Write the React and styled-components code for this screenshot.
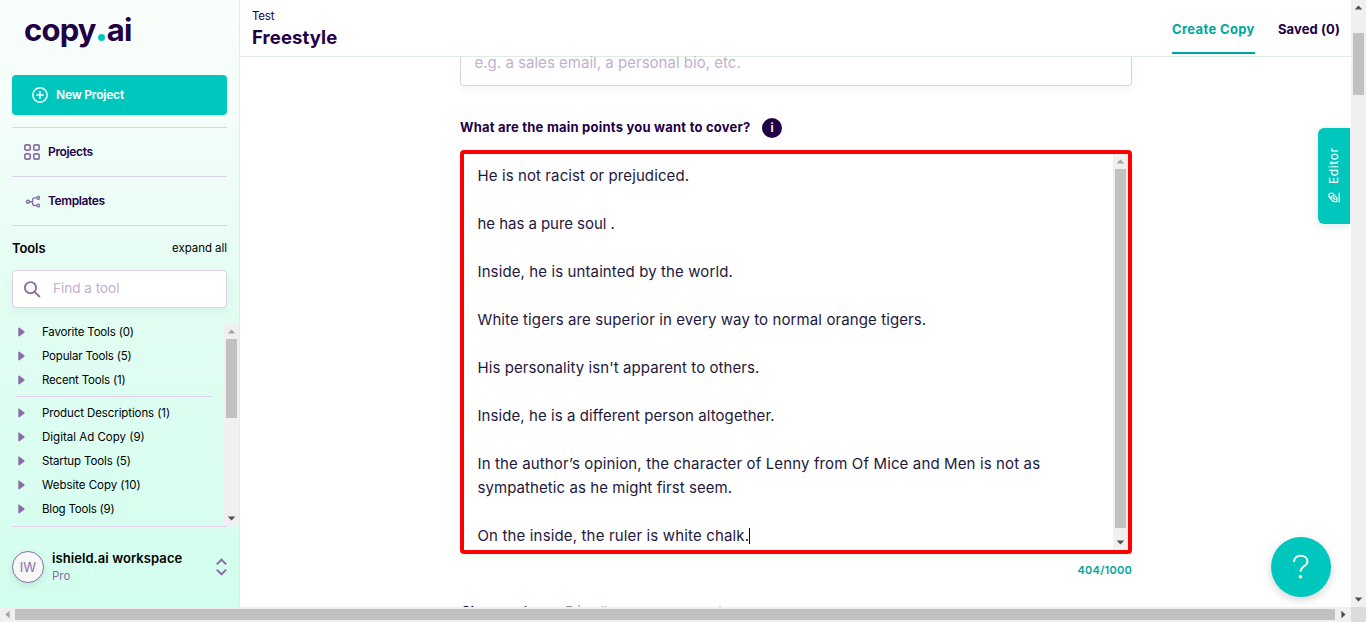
import React from "react";
import styled, { createGlobalStyle } from "styled-components";

const Global = createGlobalStyle`
  *, *::before, *::after { box-sizing: border-box; }
  html, body { margin: 0; padding: 0; overflow: hidden; background: #fff; }
  body { font-family: Inter, "Liberation Sans", sans-serif; color: #220046; }
  button { font: inherit; border: 0; padding: 0; background: none; text-align: left; }
  p, h1, h2 { margin: 0; font-size: inherit; font-weight: inherit; }
  svg { display: block; flex: none; }
`;

const Window = styled.div`
  width: 1366px;
  height: 622px;
  display: grid;
  grid-template-columns: 1351px 15px;
  grid-template-rows: 607px 15px;
  overflow: hidden;
`;

const Page = styled.div`
  position: relative;
  display: grid;
  grid-template-columns: 240px 1fr;
  height: 607px;
  min-width: 0;
  overflow: hidden;
`;

const Label = styled.span`
  font-size: ${(p) => p.$size || 12}px;
  font-weight: ${(p) => p.$weight || 400};
  line-height: ${(p) => p.$line || 16}px;
  letter-spacing: ${(p) => p.$track || 0}px;
  color: ${(p) => p.$color || "inherit"};
  white-space: nowrap;
`;

/* Scrollbars */
const VTrack = styled.div`
  width: 15px;
  height: 100%;
  flex: none;
  background: #f0f0f0;
  display: flex;
  flex-direction: column;
  align-items: center;
`;
const VThumb = styled.div`
  width: 11px;
  height: ${(p) => p.$size}px;
  margin-top: ${(p) => p.$offset || 0}px;
  background: #c1c1c1;
`;
const ArrowBox = styled.div`
  width: 15px;
  height: 15px;
  flex: none;
  display: grid;
  place-items: center;
  margin-top: ${(p) => (p.$end ? "auto" : 0)};
`;
const HTrack = styled.div`
  height: 15px;
  background: #f0f0f0;
  display: flex;
  align-items: center;
  justify-content: space-between;
`;
const HThumb = styled.div`
  height: 11px;
  flex: 1;
  margin-right: 1px;
  background: #c1c1c1;
`;
const Corner = styled.div`
  background: #dcdcdc;
`;

const rotations = { up: 0, right: 90, down: 180, left: 270 };
const Arrow = ({ dir, muted, end }) => (
  <ArrowBox $end={end}>
    <svg width="15" height="15" viewBox="0 0 15 15">
      <path d="M7.5 5.4 11.3 9.6H3.7z" fill={muted ? "#a3a3a3" : "#505050"} transform={`rotate(${rotations[dir]} 7.5 7.5)`} />
    </svg>
  </ArrowBox>
);
const VScroll = ({ size, offset, topMuted }) => (
  <VTrack>
    <Arrow dir="up" muted={topMuted} />
    <VThumb $size={size} $offset={offset} />
    <Arrow dir="down" end />
  </VTrack>
);

/* Sidebar */
const Sidebar = styled.aside`
  height: 607px;
  display: flex;
  flex-direction: column;
  border-right: 1px solid #dcefe5;
  background: linear-gradient(180deg, #f9fefb 0%, #f3fdf9 20%, #e3fdf3 50%, #d2feee 100%);
`;
const Logo = styled.div`
  height: 75px;
  padding: 10px 0 0 24px;
  font-size: 31px;
  line-height: 39px;
  font-weight: 650;
  letter-spacing: -0.8px;
  display: flex;
`;
const LogoDot = styled.span`
  width: 7px;
  height: 7px;
  border-radius: 50%;
  background: #00c7be;
  margin: 24px 2px 0 2px;
`;
const NewProject = styled.button`
  height: 40px;
  margin: 0 12px 12px;
  padding-left: 20px;
  border-radius: 4px;
  background: #00c7be;
  color: #fff;
  display: flex;
  align-items: center;
  gap: 8px;
`;
const NavItem = styled.a`
  height: 49px;
  margin: 0 12px;
  padding-left: 12px;
  border-top: 1px solid #dfd3e8;
  display: flex;
  align-items: center;
  gap: 8px;
`;
const ToolsHead = styled.div`
  height: 45px;
  margin: 0 12px;
  border-top: 1px solid #dfd3e8;
  display: flex;
  align-items: center;
  justify-content: space-between;
  color: #000;
`;
const Search = styled.div`
  height: 38px;
  margin: 0 12px;
  padding-left: 11px;
  background: #fff;
  border: 1px solid #dcd0e6;
  border-radius: 4px;
  box-shadow: 0 4px 10px rgba(0, 80, 80, 0.06);
  display: flex;
  align-items: center;
  gap: 12px;
`;
const SearchHint = styled.span`
  display: flex;
  padding-bottom: 2px;
`;
const ToolPane = styled.div`
  height: 202px;
  margin: 16px 0 0 12px;
  display: flex;
  justify-content: space-between;
`;
const ToolList = styled.div`
  width: 204px;
  height: 202px;
  padding-left: 4px;
  color: #000;
`;
const ToolRow = styled.div`
  height: 24px;
  padding: 0 0 8px 1px;
  display: flex;
  align-items: center;
  gap: 16px;
`;
const Divider = styled.div`
  height: 1px;
  margin: 0 4px 8px 0;
  background: #e2cfe9;
`;
const Workspace = styled.div`
  height: 81px;
  margin: 0 12px;
  border-top: 1px solid #e2cfe9;
  display: flex;
  align-items: center;
  gap: 8px;
`;
const Avatar = styled.div`
  width: 32px;
  height: 32px;
  border: 1px solid #8d6fa8;
  border-radius: 50%;
  background: #f7f7f8;
  box-shadow: 0 3px 6px rgba(30, 80, 80, 0.13);
  display: grid;
  place-items: center;
  flex: none;
`;
const WorkspaceName = styled.div`
  flex: 1;
  display: flex;
  flex-direction: column;
  gap: 2px;
`;

/* Main area */
const Main = styled.main`
  min-width: 0;
  height: 607px;
  display: flex;
  flex-direction: column;
  overflow: hidden;
`;
const Header = styled.header`
  height: 57px;
  flex: none;
  padding: 0 12px;
  border-bottom: 1px solid #dcefe1;
  display: flex;
  justify-content: space-between;
`;
const Titles = styled.div`
  padding-top: 8px;
  display: flex;
  flex-direction: column;
`;
const Tabs = styled.nav`
  display: flex;
  gap: 23px;
`;
const Tab = styled.a`
  width: ${(p) => p.$width}px;
  height: 54px;
  padding-top: 18px;
  border-bottom: 2px solid ${(p) => (p.$active ? "#00a69e" : "transparent")};
  color: ${(p) => (p.$active ? "#00a69e" : "#220046")};
`;
const Form = styled.section`
  width: 672px;
  margin-left: 220px;
  display: flex;
  flex-direction: column;
`;
const ClippedInput = styled.div`
  height: 29px;
  flex: none;
  padding: 0 0 0 13.5px;
  border: 1px solid #dcd0e6;
  border-top: 0;
  border-radius: 0 0 4px 4px;
  box-shadow: 0 4px 9px rgba(0, 90, 90, 0.05);
  display: flex;
  align-items: flex-start;
`;
const Question = styled.div`
  height: 64px;
  flex: none;
  padding-top: 20px;
  display: flex;
  align-items: center;
`;
const QuestionInner = styled.div`
  width: 322px;
  display: flex;
  align-items: center;
`;
const QuestionText = styled.h2`
  display: flex;
  padding-bottom: 2px;
`;
const Info = styled.span`
  width: 20px;
  height: 20px;
  margin-left: auto;
  border-radius: 50%;
  background: #220046;
  display: grid;
  place-items: center;
`;
const TextBox = styled.div`
  height: 404px;
  flex: none;
  border: 4px solid #f00;
  border-radius: 4px;
  box-shadow: 0 4px 9px rgba(0, 90, 90, 0.05);
  display: flex;
  justify-content: space-between;
`;
const Copy = styled.div`
  padding: 10px 0 0 13.5px;
  color: #23183c;
`;
const Line = styled.p`
  height: 24px;
  display: flex;
  align-items: center;
`;
const Caret = styled.span`
  width: 1px;
  height: 16px;
  background: #000;
`;
const Count = styled.div`
  height: 46px;
  flex: none;
  padding-top: 4px;
  text-align: right;
`;
const NextRow = styled.div`
  height: 20px;
  flex: none;
  display: flex;
  padding-left: 1px;
`;
const NextItem = styled.span`
  width: ${(p) => p.$width}px;
`;
const NextRule = styled.span`
  width: 2px;
  height: 12px;
  margin-top: 6px;
  background: #c9c0dc;
`;

const EditorTab = styled.button`
  position: absolute;
  right: 1px;
  top: 128px;
  width: 32px;
  height: 96px;
  padding-top: 20px;
  border-radius: 6px 0 0 6px;
  background: #00c7be;
  box-shadow: 0 2px 10px rgba(0, 80, 80, 0.12);
  color: #fff;
  display: flex;
  flex-direction: column;
  align-items: center;
  justify-content: flex-start;
  gap: 8px;
`;
const Vertical = styled.span`
  writing-mode: vertical-rl;
  transform: rotate(180deg);
  width: 16px;
  height: 36px;
  display: flex;
  align-items: center;
`;
const Help = styled.button`
  position: absolute;
  right: 20px;
  top: 537px;
  width: 60px;
  height: 60px;
  border-radius: 50%;
  background: #00c7be;
  box-shadow: 0 3px 8px rgba(0, 0, 0, 0.17);
  display: grid;
  place-items: center;
`;

const Plus = () => (
  <svg width="16" height="16" viewBox="0 0 16 16" fill="none" stroke="#fff" strokeWidth="1.4" strokeLinecap="round">
    <circle cx="8" cy="8" r="7.2" />
    <path d="M8 4.8v6.4M4.8 8h6.4" />
  </svg>
);
const GridIcon = () => (
  <svg width="16" height="16" viewBox="0 0 16 16" fill="none" stroke="#8a6fa6" strokeWidth="1.7">
    <rect x=".8" y=".8" width="5.4" height="5.4" rx="1.5" />
    <rect x="9.8" y=".8" width="5.4" height="5.4" rx="1.5" />
    <rect x=".8" y="9.8" width="5.4" height="5.4" rx="1.5" />
    <rect x="9.8" y="9.8" width="5.4" height="5.4" rx="1.5" />
  </svg>
);
const BranchIcon = () => (
  <svg width="16" height="16" viewBox="0 0 16 16" fill="none" stroke="#8a6fa6" strokeWidth="1.4">
    <circle cx="4" cy="8.7" r="1.5" />
    <circle cx="14.3" cy="4.9" r="1.4" />
    <circle cx="14.3" cy="12.5" r="1.4" />
    <path d="M5.5 8.7h3M12.9 4.9h-2.3c-1.3 0-2 .7-2 2v3.6c0 1.3.7 2 2 2h2.3" />
  </svg>
);
const SearchIcon = () => (
  <svg width="17" height="17" viewBox="0 0 17 17" fill="none" stroke="#8a6fa6" strokeWidth="1.9">
    <circle cx="6.5" cy="6.7" r="5.6" />
    <path d="m10.6 10.8 5.2 5.2" />
  </svg>
);
const Disclosure = () => (
  <svg width="9" height="10" viewBox="0 0 9 10">
    <path d="M1.3 1.2v7.6c0 .6.7.8 1.2.5l4.7-3.6c.5-.4.5-1 0-1.4L2.5.7C2 .4 1.3.6 1.3 1.2z" fill="#8a6fa6" />
  </svg>
);
const UpDown = () => (
  <svg width="11" height="18" viewBox="0 0 11 18" fill="none" stroke="#8a6fa6" strokeWidth="2">
    <path d="M.8 6.4 5.5 1.7l4.7 4.7M.8 11.6l4.7 4.7 4.7-4.7" />
  </svg>
);
const PenIcon = () => (
  <svg width="12" height="12" viewBox="0 0 12 12" fill="none" stroke="#fff" strokeWidth="1.2">
    <path d="M.8 3.3C.8 1.4 3.6.2 5 1.7l4 4.6-.3 3.4-3.4-.2L1.2 5C.8 4.5.7 4 .8 3.3zM2.9 6.3c.1-1.8 1.6-3 3.4-3M4.8 5l2.4 2.8" />
    <path d="M11.2.8v9.6" />
  </svg>
);
const HelpMark = () => (
  <svg width="18" height="26" viewBox="0 0 18 26" fill="none">
    <path d="M2 8C2 3.9 4.8 1.8 8.6 1.8c4 0 6.8 2.2 6.8 5.6 0 5-6.8 4.7-6.8 10" stroke="#fff" strokeWidth="1.9" />
    <circle cx="8.5" cy="22.8" r="1.8" fill="#fff" />
  </svg>
);

const featured = [
  ["Favorite Tools (0)", -0.17],
  ["Popular Tools (5)", -0.18],
  ["Recent Tools (1)", -0.18],
];
const categories = [
  ["Product Descriptions (1)", -0.1],
  ["Digital Ad Copy (9)", 0],
  ["Startup Tools (5)", -0.12],
  ["Website Copy (10)", -0.03],
  ["Blog Tools (9)", -0.21],
];
const lines = [
  ["He is not racist or prejudiced.", 0.1],
  [],
  ["he has a pure soul .", -0.05],
  [],
  ["Inside, he is untainted by the world.", 0.11],
  [],
  ["White tigers are superior in every way to normal orange tigers.", 0.1],
  [],
  ["His personality isn't apparent to others.", 0.08],
  [],
  ["Inside, he is a different person altogether.", 0.07],
  [],
  ["In the author’s opinion, the character of Lenny from Of Mice and Men is not as", 0.13],
  ["sympathetic as he might first seem.", 0.07],
  [],
  ["On the inside, the ruler is white chalk.", 0.15],
];

const Tool = ({ name, track }) => (
  <ToolRow>
    <Disclosure />
    <Label $size={11.5} $track={track}>{name}</Label>
  </ToolRow>
);

export default function App() {
  return (
    <>
      <Global />
      <Window>
        <Page>
          <Sidebar>
            <Logo>copy<LogoDot />ai</Logo>
            <NewProject>
              <Plus />
              <Label $weight={600} $track={-0.2}>New Project</Label>
            </NewProject>
            <NavItem><GridIcon /><Label $weight={600} $track={-0.35}>Projects</Label></NavItem>
            <NavItem><BranchIcon /><Label $weight={600} $track={-0.4}>Templates</Label></NavItem>
            <ToolsHead>
              <Label $size={13} $weight={600} $track={-0.1}>Tools</Label>
              <Label $size={11.5} $track={-0.05}>expand all</Label>
            </ToolsHead>
            <Search>
              <SearchIcon />
              <SearchHint><Label $size={13.5} $color="#bfb0cd">Find a tool</Label></SearchHint>
            </Search>
            <ToolPane>
              <ToolList>
                {featured.map(([name, track]) => <Tool key={name} name={name} track={track} />)}
                <Divider />
                {categories.map(([name, track]) => <Tool key={name} name={name} track={track} />)}
              </ToolList>
              <VScroll size={79} topMuted />
            </ToolPane>
            <Workspace>
              <Avatar><Label $size={13} $color="#8a6fa6">IW</Label></Avatar>
              <WorkspaceName>
                <Label $size={13} $weight={600} $color="#000" $track={0.07}>ishield.ai workspace</Label>
                <Label $size={11.5} $line={17} $color="#8a6fa6">Pro</Label>
              </WorkspaceName>
              <UpDown />
            </Workspace>
          </Sidebar>
          <Main>
            <Header>
              <Titles>
                <Label $size={11.5} $track={-0.2}>Test</Label>
                <Label $size={18.5} $line={26} $weight={650} $track={0.1}>Freestyle</Label>
              </Titles>
              <Tabs>
                <Tab $active $width={83}><Label $size={13} $weight={650} $line={20} $track={0.35}>Create Copy</Label></Tab>
                <Tab $width={61}><Label $size={13} $weight={650} $line={20} $track={0.1}>Saved (0)</Label></Tab>
              </Tabs>
            </Header>
            <Form>
              <ClippedInput><Label $size={15} $line={12} $color="#bfb0cd" $track={0.02}>e.g. a sales email, a personal bio, etc.</Label></ClippedInput>
              <Question>
                <QuestionInner>
                  <QuestionText><Label $size={13} $weight={700} $track={0.22}>What are the main points you want to cover?</Label></QuestionText>
                  <Info><Label $line={18} $weight={600} $color="#fff">i</Label></Info>
                </QuestionInner>
              </Question>
              <TextBox>
                <Copy>
                  {lines.map(([text, track], i) => (
                    <Line key={i}>
                      {text && <Label $size={15} $line={24} $track={track}>{text}</Label>}
                      {i === lines.length - 1 && <Caret />}
                    </Line>
                  ))}
                </Copy>
                <VScroll size={359} topMuted />
              </TextBox>
              <Count><Label $size={11} $weight={600} $track={0.25} $color="#00a69e">404/1000</Label></Count>
              <NextRow>
                <NextItem $width={104}><Label $size={13} $weight={700}>Choose a tone</Label></NextItem>
                <NextItem $width={154}><Label $size={13} $color="#8793a8">Friendly</Label></NextItem>
                <NextRule />
              </NextRow>
            </Form>
          </Main>
          <EditorTab>
            <Vertical><Label $track={0.6}>Editor</Label></Vertical>
            <PenIcon />
          </EditorTab>
          <Help><HelpMark /></Help>
        </Page>
        <VScroll size={62} offset={18} />
        <HTrack><Arrow dir="left" muted /><HThumb /><Arrow dir="right" /></HTrack>
        <Corner />
      </Window>
    </>
  );
}
